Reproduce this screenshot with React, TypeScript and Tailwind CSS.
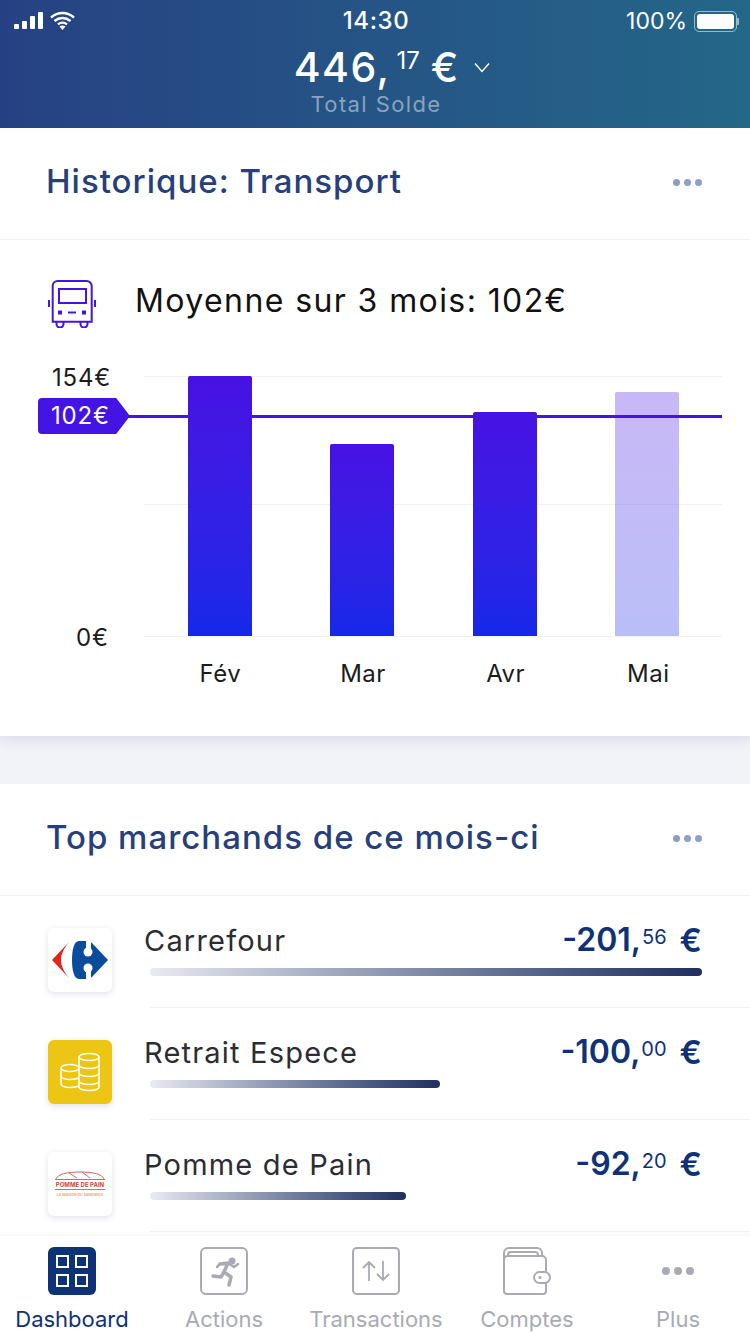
import type { ReactNode } from 'react';

const font = { fontFamily: 'Inter, "Liberation Sans", sans-serif' };

const bars = [
  { label: 'Fév', height: 260, faded: false },
  { label: 'Mar', height: 192, faded: false },
  { label: 'Avr', height: 224, faded: false },
  { label: 'Mai', height: 244, faded: true },
];

function Dots() {
  return (
    <div className="flex gap-[4px]">
      <span className="w-[7px] h-[7px] rounded-full bg-[#8c9fc4]" />
      <span className="w-[7px] h-[7px] rounded-full bg-[#8c9fc4]" />
      <span className="w-[7px] h-[7px] rounded-full bg-[#8c9fc4]" />
    </div>
  );
}

function StatusBar() {
  return (
    <div className="relative flex items-center justify-between h-[42px] pl-[14px] pr-[11px] text-white">
      <div className="flex items-center gap-[7px] -mt-[2px]">
        <div className="flex items-end gap-[3px] h-[17px]">
          <span className="w-[5px] h-[5px] bg-white rounded-[1px]" />
          <span className="w-[5px] h-[8px] bg-white rounded-[1px]" />
          <span className="w-[5px] h-[13px] bg-white rounded-[1px]" />
          <span className="w-[5px] h-[17px] bg-white rounded-[1px]" />
        </div>
        <svg width="25" height="19" viewBox="0 0 25 19" fill="none" stroke="#fff" strokeWidth="2.400">
          <path d="M1 6.500c7-6 16-6 23 0" />
          <path d="M4.500 10c4.800-4 11.200-4 16 0" />
          <path d="M8 13.400c2.800-2.200 6.200-2.200 9 0" />
          <path d="M12.500 19l-3-3.600c1.800-1.100 4.200-1.100 6 0z" fill="#fff" stroke="none" />
        </svg>
      </div>
      <span className="absolute left-[2px] right-0 text-center text-[24px] font-medium leading-[42px] tracking-[0.6px]">14:30</span>
      <div className="flex items-center gap-[7px]">
        <span className="text-[23px] leading-[42px]">100%</span>
        <div className="flex items-center">
          <div className="w-[43px] h-[21px] rounded-[5px] border-[1.5px] border-[#9fb8c8] p-[2px]">
            <div className="w-full h-full rounded-[3px] bg-white" />
          </div>
          <span className="w-[2px] h-[7px] bg-[#9fb8c8] rounded-r-[1px]" />
        </div>
      </div>
    </div>
  );
}

function Header() {
  return (
    <header className="h-[128px] bg-gradient-to-r from-[#264183] to-[#246788] shrink-0">
      <StatusBar />
      <div className="flex items-start justify-center h-[48px] pl-[35px] text-white">
        <span className="text-[41px] font-medium leading-[50px] tracking-[1.5px]">446,</span>
        <span className="text-[24px] leading-[38px] ml-[6px] mr-[11px]">17</span>
        <span className="text-[41px] font-medium leading-[50px]">€</span>
        <svg className="ml-[15px] mt-[16px]" width="18" height="18" viewBox="0 0 18 18" fill="none" stroke="#fff" strokeWidth="1.400">
          <path d="M2 5.500l7 8 7-8" />
        </svg>
      </div>
      <p className="text-center text-[22px] leading-[28px] text-[#88a4bd] tracking-[1.400px] pl-[2px]">Total Solde</p>
    </header>
  );
}

function SectionTitle({ title }: { title: string }) {
  return (
    <div className="flex items-center justify-between h-[112px] pl-[46px] pr-[48px] pb-[3px] border-b border-[#f0f1f4]">
      <h2 className="text-[33px] font-medium text-[#27407c] tracking-[1px]">{title}</h2>
      <Dots />
    </div>
  );
}

function BusIcon() {
  return (
    <svg width="48" height="48" viewBox="0 0 48 48" fill="none" stroke="#4314e4" strokeWidth="2">
      <path d="M4.700 41.700V6a5 5 0 0 1 5-5h29a5 5 0 0 1 5 5v35.700z" />
      <rect x="11" y="9" width="27" height="14" />
      <path d="M1 20v7M47 20v7" />
      <path d="M20 32.500h8" />
      <path d="M10 32.500h4M34 32.500h4" strokeWidth="4" />
      <path d="M8.500 42v2a3.500 3.500 0 0 0 7 0v-2M32.500 42v2a3.500 3.500 0 0 0 7 0v-2" />
    </svg>
  );
}

function Chart() {
  return (
    <div className="relative h-[340px]">
      {/* grid lines and the mean marker sit over the bars */}
      <div className="absolute left-[144px] right-[28px] top-[20px] h-px bg-[#f0f1f4]" />
      <div className="absolute left-[144px] right-[28px] top-[148px] h-px bg-[#f0f1f4]" />
      <div className="absolute left-[144px] right-[28px] top-[280px] h-px bg-[#f0f1f4]" />
      <span className="absolute left-[52px] top-[8px] text-[24px] leading-[28px] tracking-[0.8px] text-[#1c1c1c]">154€</span>
      <span className="absolute left-[76px] top-[268px] text-[24px] leading-[28px] tracking-[0.8px] text-[#1c1c1c]">0€</span>

      <div className="absolute left-[188px] top-[20px] flex gap-[78.3px] items-end h-[260px]">
        {bars.map((bar) => (
          <div
            key={bar.label}
            className={`w-[64px] rounded-t-[2px] bg-gradient-to-b from-[#4711e3] to-[#1528e8] ${bar.faded ? 'opacity-30' : ''}`}
            style={{ height: bar.height }}
          />
        ))}
      </div>
      <div className="absolute left-[149px] top-[303px] flex">
        {bars.map((bar) => (
          <span key={bar.label} className="w-[142.67px] text-center text-[24px] leading-[30px] tracking-[0.5px] text-[#1c1c1c]">
            {bar.label}
          </span>
        ))}
      </div>

      <div className="absolute left-[128px] right-[28px] top-[59px] h-[3px] bg-[#4314e4]" />
      <div className="absolute left-[38px] top-[42px] w-[92px] h-[36px] bg-[#4314e4] rounded-l-[4px] [clip-path:polygon(0_0,85%_0,100%_50%,85%_100%,0_100%)] text-white text-[24px] leading-[36px] tracking-[0.8px] pl-[13px]">
        102€
      </div>
    </div>
  );
}

function Amount({ whole, cents }: { whole: string; cents: string }) {
  return (
    <div className="flex items-start text-[#0f3277] h-[40px] shrink-0">
      <span className="text-[32px] font-semibold leading-[40px]">{whole},</span>
      <span className="text-[20px] leading-[28px] mt-[3px] ml-[1px]">{cents}</span>
      <span className="text-[33px] font-semibold leading-[40px] ml-[13px]">€</span>
    </div>
  );
}

function MerchantRow({ icon, name, whole, cents, bar, last }: { icon: ReactNode; name: string; whole: string; cents: string; bar: number; last?: boolean }) {
  return (
    <div className="flex h-[112px] pl-[48px]">
      <div className="pt-[32px] shrink-0">{icon}</div>
      <div className={`flex-1 ml-[38px] pr-[48px] ${last ? '' : 'border-b border-[#f0f1f4]'}`}>
        <div className="flex justify-between items-start h-[44px] pt-[24px] -ml-[6px] box-content">
          <span className="text-[29px] leading-[42px] text-[#2b2d33] tracking-[1.200px]">{name}</span>
          <Amount whole={whole} cents={cents} />
        </div>
        <div
          className="h-[8px] mt-[4px] rounded-full bg-gradient-to-r from-[#e9ebf2] to-[#20305f]"
          style={{ width: bar }}
        />
      </div>
    </div>
  );
}

function LogoTile({ children, className = 'bg-white' }: { children: ReactNode; className?: string }) {
  return (
    <div className={`w-[64px] h-[64px] rounded-[6px] shadow-[0_2px_6px_rgba(40,50,90,0.14)] flex items-center justify-center ${className}`}>
      {children}
    </div>
  );
}

function CarrefourLogo() {
  return (
    <svg width="64" height="64" viewBox="0 0 64 64">
      <path d="M21 14L4 32l17 18C15.500 43 13 37.500 13 32s2.500-11 8-18z" fill="#e1251b" />
      <path d="M31 13h7l5 1 17 18-17 18-5 1h-7c-5 0-7-9-7-19s2-19 7-19z" fill="#0a4c9c" />
      <circle cx="40" cy="24" r="4.500" fill="#fff" />
      <circle cx="40" cy="40" r="4.500" fill="#fff" />
      <path d="M38 12h5v10h-5zM38 42h5v10h-5z" fill="#fff" />
    </svg>
  );
}

function CoinsIcon() {
  return (
    <svg width="44" height="44" viewBox="0 0 44 44" fill="none" stroke="#fff" strokeWidth="1.500">
      <ellipse cx="31" cy="7" rx="10" ry="3.500" />
      <path d="M21 7v30c0 2 4.500 3.500 10 3.500S41 39 41 37V7" />
      <path d="M21 15c0 2 4.500 3.500 10 3.500S41 17 41 15M21 23c0 2 4.500 3.500 10 3.500S41 25 41 23M21 31c0 2 4.500 3.500 10 3.500S41 33 41 31" />
      <ellipse cx="12" cy="18" rx="9" ry="3.500" />
      <path d="M3 18v16c0 2 4 3.500 9 3.500 3 0 6-.500 9-1.500M3 26c0 2 4 3.500 9 3.500 3 0 6-.500 9-1.500" />
    </svg>
  );
}

function PommeLogo() {
  return (
    <div className="w-[52px] flex flex-col items-center">
      <svg width="50" height="8" viewBox="0 0 50 8" fill="none" stroke="#d8695a" strokeWidth="1">
        <path d="M1 8C3 3 12 1 25 1s22 2 24 7M14 2l8 5M27 1l8 6" />
      </svg>
      <span className="w-[50px] border-y border-[#d8695a] text-center text-[6px] leading-[9px] font-bold text-[#c9463b] whitespace-nowrap">POMME DE PAIN</span>
      <span className="mt-[3px] text-[3.500px] leading-[4px] font-bold text-[#e3b264] whitespace-nowrap">LA MAISON DU SANDWICH</span>
    </div>
  );
}

function TabIcon({ children }: { children: ReactNode }) {
  return <div className="w-[48px] h-[48px] flex items-center justify-center">{children}</div>;
}

function TabBar() {
  const grey = '#a9abb3';
  const tabs: { label: string; active?: boolean; width: string; icon: ReactNode }[] = [
    {
      label: 'Dashboard',
      active: true,
      width: 'w-[152px]',
      icon: (
        <div className="w-[48px] h-[48px] shrink-0 rounded-[6px] bg-[#0f3277] grid grid-cols-2 gap-[6px] p-[8px]">
          <span className="border-[2px] border-white" />
          <span className="border-[2px] border-white" />
          <span className="border-[2px] border-white" />
          <span className="border-[2px] border-white" />
        </div>
      ),
    },
    {
      label: 'Actions',
      width: 'w-[152px]',
      icon: (
        <svg width="48" height="48" viewBox="0 0 48 48" fill="none" stroke={grey} strokeLinecap="round" strokeLinejoin="round">
          <rect x="1" y="1" width="46" height="46" rx="5" strokeWidth="2" />
          <circle cx="32" cy="14" r="3.500" fill={grey} stroke="none" />
          <path d="M20 17l8-1-4 9 7 5-2 8" strokeWidth="3.500" />
          <path d="M24 25l-3 5-8-1" strokeWidth="3.500" />
          <path d="M28 16l6 4 4-3" strokeWidth="2.500" />
          <path d="M20 17l-3 3" strokeWidth="2.500" />
        </svg>
      ),
    },
    {
      label: 'Transactions',
      width: 'w-[152px]',
      icon: (
        <div className="w-[48px] h-[48px] shrink-0 rounded-[5px] border-[2px] border-[#a9abb3] flex items-center justify-center">
          <svg width="30" height="24" viewBox="0 0 30 24" fill="none" stroke={grey} strokeWidth="1.800">
            <path d="M8 22V3M2 9l6-6 6 6M22 2v19M16 15l6 6 6-6" />
          </svg>
        </div>
      ),
    },
    {
      label: 'Comptes',
      width: 'w-[150px]',
      icon: (
        <svg width="48" height="48" viewBox="0 0 48 48" fill="none" stroke={grey} strokeWidth="2">
          <path d="M1 12V6a5 5 0 0 1 5-5h28a5 5 0 0 1 5 5v3" />
          <path d="M5 9V8a3 3 0 0 1 3-3h24a3 3 0 0 1 3 3v1" />
          <path d="M43 26V13a4 4 0 0 0-4-4H5a4 4 0 0 0-4 3v32a3 3 0 0 0 3 3h36a3 3 0 0 0 3-3v-8" />
          <rect x="31" y="25" width="16" height="11" rx="5.500" />
          <circle cx="37" cy="30.500" r="1.500" fill={grey} stroke="none" />
        </svg>
      ),
    },
    {
      label: 'Plus',
      width: 'w-[152px]',
      icon: (
        <div className="flex gap-[4px] shrink-0">
          <span className="w-[8px] h-[8px] rounded-full bg-[#a9abb3]" />
          <span className="w-[8px] h-[8px] rounded-full bg-[#a9abb3]" />
          <span className="w-[8px] h-[8px] rounded-full bg-[#a9abb3]" />
        </div>
      ),
    },
  ];

  return (
    <nav className="h-[98px] shrink-0 bg-white flex -ml-[4px] shadow-[0_-2px_4px_rgba(40,50,90,0.05)] relative">
      {tabs.map((tab) => (
        <div key={tab.label} className={`${tab.width} shrink-0 flex flex-col items-center pt-[11px]`}>
          <TabIcon>{tab.icon}</TabIcon>
          <span className={`mt-[10px] text-[22px] leading-[28px] whitespace-nowrap ${tab.active ? 'text-[#0f3277]' : 'text-[#a9abb3]'}`}>
            {tab.label}
          </span>
        </div>
      ))}
    </nav>
  );
}

export default function App() {
  return (
    <div className="w-[750px] h-[1334px] flex flex-col overflow-hidden bg-[#f1f3f8]" style={font}>
      <Header />
      <main className="flex-1 overflow-hidden">
        <section className="bg-white h-[608px] shadow-[0_4px_12px_rgba(40,50,90,0.12)]">
          <SectionTitle title="Historique: Transport" />
          <div className="flex items-start gap-[39px] h-[116px] pl-[48px] pt-[40px]">
            <BusIcon />
            <span className="text-[32px] leading-[42px] text-[#111] tracking-[1.400px]">Moyenne sur 3 mois: 102€</span>
          </div>
          <Chart />
        </section>
        <section className="bg-white mt-[48px] h-[460px]">
          <SectionTitle title="Top marchands de ce mois-ci" />
          <MerchantRow icon={<LogoTile><CarrefourLogo /></LogoTile>} name="Carrefour" whole="-201" cents="56" bar={552} />
          <MerchantRow icon={<LogoTile className="bg-[#edc515]"><CoinsIcon /></LogoTile>} name="Retrait Espece" whole="-100" cents="00" bar={290} />
          <MerchantRow icon={<LogoTile><PommeLogo /></LogoTile>} name="Pomme de Pain" whole="-92" cents="20" bar={256} />
        </section>
      </main>
      <TabBar />
    </div>
  );
}
